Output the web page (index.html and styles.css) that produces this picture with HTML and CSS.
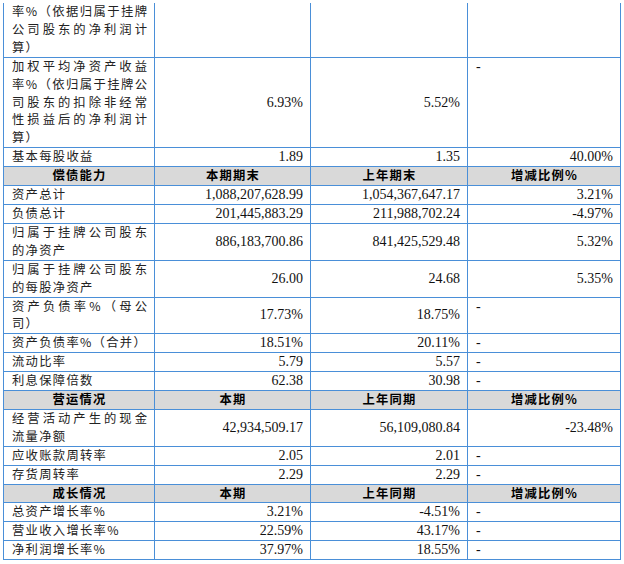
FILE: index.html
```html
<!DOCTYPE html>
<html lang="zh-CN">
<head>
<meta charset="utf-8">
<title>主要财务数据</title>
<link rel="stylesheet" href="styles.css">
</head>
<body>
<table class="fin">
  <colgroup>
    <col class="c1"><col class="c2"><col class="c3"><col class="c4">
  </colgroup>
  <tbody>
    <tr class="first">
      <td class="label"><span class="ln">率%（依据归属于挂牌</span><span class="ln">公司股东的净利润计</span><span class="end">算）</span></td>
      <td class="num"></td>
      <td class="num"></td>
      <td class="num"></td>
    </tr>
    <tr>
      <td class="label"><span class="ln">加权平均净资产收益</span><span class="ln">率%（依归属于挂牌公</span><span class="ln">司股东的扣除非经常</span><span class="ln">性损益后的净利润计</span><span class="end">算）</span></td>
      <td class="num">6.93%</td>
      <td class="num">5.52%</td>
      <td class="dash">-</td>
    </tr>
    <tr>
      <td class="label">基本每股收益</td>
      <td class="num">1.89</td>
      <td class="num">1.35</td>
      <td class="num">40.00%</td>
    </tr>
    <tr class="head">
      <td>偿债能力</td>
      <td>本期期末</td>
      <td>上年期末</td>
      <td>增减比例%</td>
    </tr>
    <tr>
      <td class="label">资产总计</td>
      <td class="num">1,088,207,628.99</td>
      <td class="num">1,054,367,647.17</td>
      <td class="num">3.21%</td>
    </tr>
    <tr>
      <td class="label">负债总计</td>
      <td class="num">201,445,883.29</td>
      <td class="num">211,988,702.24</td>
      <td class="num">-4.97%</td>
    </tr>
    <tr>
      <td class="label"><span class="ln">归属于挂牌公司股东</span><span class="end">的净资产</span></td>
      <td class="num">886,183,700.86</td>
      <td class="num">841,425,529.48</td>
      <td class="num">5.32%</td>
    </tr>
    <tr>
      <td class="label"><span class="ln">归属于挂牌公司股东</span><span class="end">的每股净资产</span></td>
      <td class="num">26.00</td>
      <td class="num">24.68</td>
      <td class="num">5.35%</td>
    </tr>
    <tr>
      <td class="label"><span class="ln">资产负债率%（母公</span><span class="end">司）</span></td>
      <td class="num">17.73%</td>
      <td class="num">18.75%</td>
      <td class="dash">-</td>
    </tr>
    <tr>
      <td class="label">资产负债率%（合并）</td>
      <td class="num">18.51%</td>
      <td class="num">20.11%</td>
      <td class="dash">-</td>
    </tr>
    <tr>
      <td class="label">流动比率</td>
      <td class="num">5.79</td>
      <td class="num">5.57</td>
      <td class="dash">-</td>
    </tr>
    <tr>
      <td class="label">利息保障倍数</td>
      <td class="num">62.38</td>
      <td class="num">30.98</td>
      <td class="dash">-</td>
    </tr>
    <tr class="head">
      <td>营运情况</td>
      <td>本期</td>
      <td>上年同期</td>
      <td>增减比例%</td>
    </tr>
    <tr>
      <td class="label"><span class="ln">经营活动产生的现金</span><span class="end">流量净额</span></td>
      <td class="num">42,934,509.17</td>
      <td class="num">56,109,080.84</td>
      <td class="num">-23.48%</td>
    </tr>
    <tr>
      <td class="label">应收账款周转率</td>
      <td class="num">2.05</td>
      <td class="num">2.01</td>
      <td class="dash">-</td>
    </tr>
    <tr>
      <td class="label">存货周转率</td>
      <td class="num">2.29</td>
      <td class="num">2.29</td>
      <td class="dash">-</td>
    </tr>
    <tr class="head">
      <td>成长情况</td>
      <td>本期</td>
      <td>上年同期</td>
      <td>增减比例%</td>
    </tr>
    <tr>
      <td class="label">总资产增长率%</td>
      <td class="num">3.21%</td>
      <td class="num">-4.51%</td>
      <td class="dash">-</td>
    </tr>
    <tr>
      <td class="label">营业收入增长率%</td>
      <td class="num">22.59%</td>
      <td class="num">43.17%</td>
      <td class="dash">-</td>
    </tr>
    <tr>
      <td class="label">净利润增长率%</td>
      <td class="num">37.97%</td>
      <td class="num">18.55%</td>
      <td class="dash">-</td>
    </tr>
  </tbody>
</table>
</body>
</html>
```
FILE: styles.css
```css
html, body {
  margin: 0;
  padding: 0;
  background: #ffffff;
}

body {
  padding: 3px 0 0 3px;
  color: #111111;
  font-family: "Liberation Serif", "Noto Sans CJK SC", serif;
  font-size: 14px;
  line-height: 17.9px;
}

.fin {
  border-collapse: collapse;
  table-layout: fixed;
  width: 617px;
}

.c1 { width: 151px; }
.c2 { width: 156px; }
.c3 { width: 157px; }
.c4 { width: 153px; }

.fin td {
  border: 1px solid #4a8fd8;
  padding: 0 7px 0 8px;
  vertical-align: middle;
  overflow: visible;
}

.fin tr.first td {
  border-top: none;
}

.label {
  text-align: left;
  font-family: "Noto Sans CJK SC", "Liberation Serif", sans-serif;
  font-size: 12.3px;
  letter-spacing: 1.3px;
  font-weight: 400;
  color: #222222;
}

.label .ln {
  display: block;
  white-space: nowrap;
  text-align: justify;
  text-align-last: justify;
  margin-right: -1.3px;
}

.label .end {
  display: block;
}

.num {
  text-align: right;
  white-space: nowrap;
}

.dash {
  text-align: left;
  vertical-align: top !important;
}

.head td {
  background: #d9d9d9;
  text-align: center;
  font-family: "Noto Sans CJK SC", sans-serif;
  font-size: 12.3px;
  letter-spacing: 1.2px;
  font-weight: 700;
  color: #000000;
}
```
